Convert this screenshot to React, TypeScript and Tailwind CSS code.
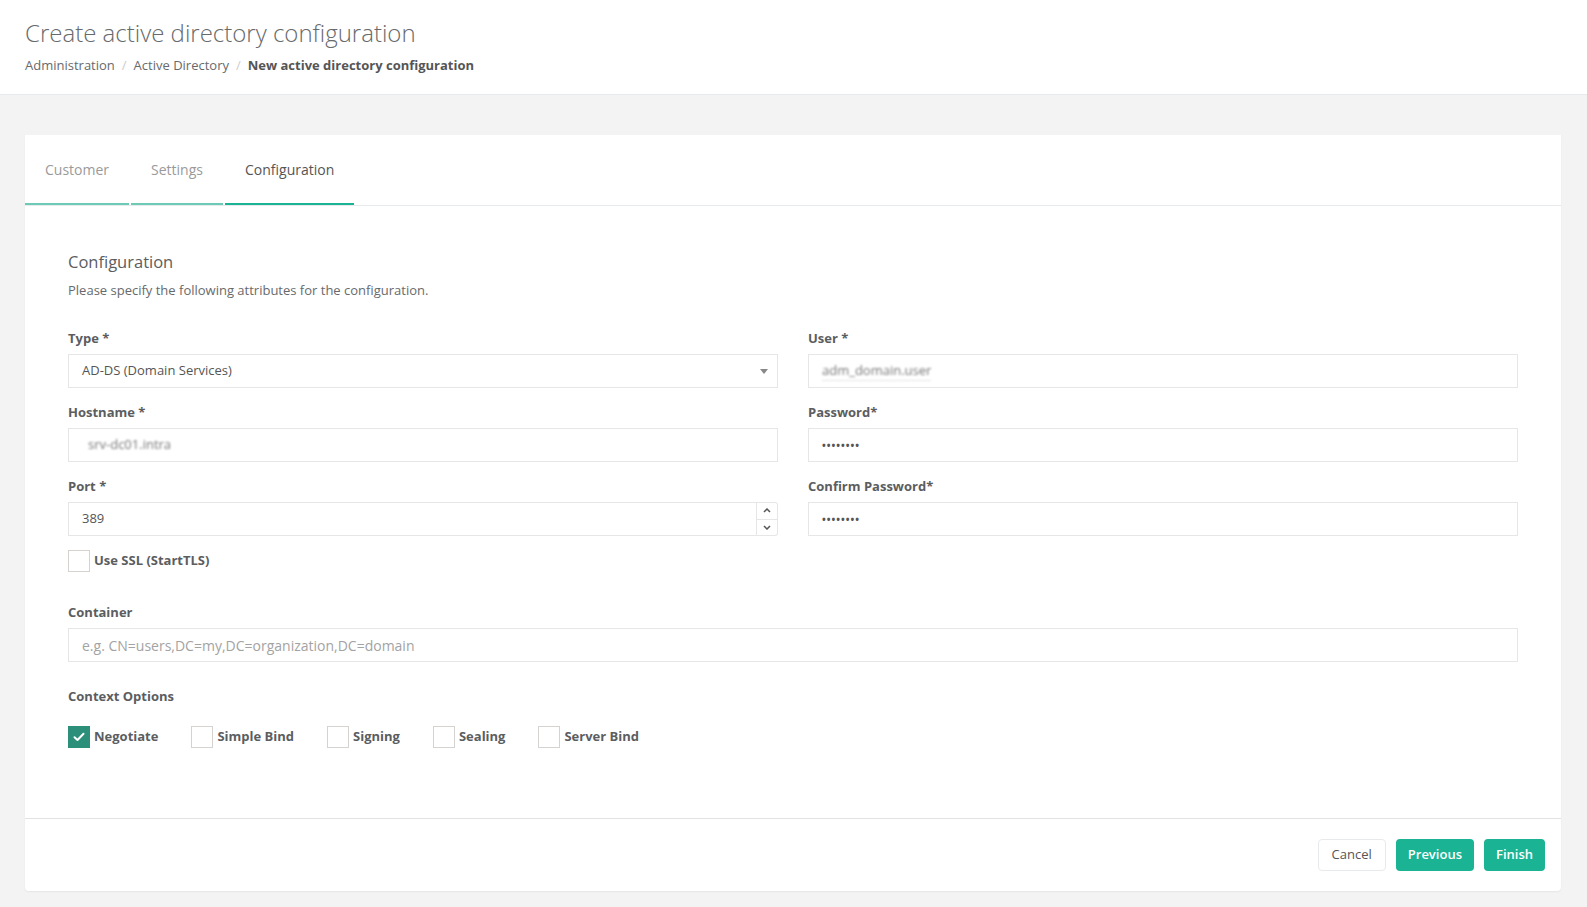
import React from 'react';

const labelCls = 'block text-[13px] leading-[18px] font-bold text-[#5b5d5f]';
const inputCls =
  'flex h-[34px] w-full items-center border border-[#e5e6e7] bg-white px-[13px] text-[13px] text-[#555]';

function Field({ label, children }: { label: string; children: React.ReactNode }) {
  return (
    <div className="mb-[15px]">
      <div className={labelCls}>{label}</div>
      <div className="mt-[7px]">{children}</div>
    </div>
  );
}

function Box({ checked }: { checked?: boolean }) {
  return checked ? (
    <span className="flex h-[22px] w-[22px] items-center justify-center bg-[#2b8f7a]">
      <svg width="12" height="10" viewBox="0 0 12 10" fill="none">
        <path d="M1.5 5.2 4.5 8 10.5 1.8" stroke="white" strokeWidth="2" strokeLinecap="round" strokeLinejoin="round" />
      </svg>
    </span>
  ) : (
    <span className="h-[22px] w-[22px] border border-[#d6d2cf] bg-white" />
  );
}

function Check({ label, checked }: { label: string; checked?: boolean }) {
  return (
    <label className="flex items-center gap-[4px]">
      <Box checked={checked} />
      <span className="text-[13px] font-bold text-[#5b5d5f]">{label}</span>
    </label>
  );
}

const Dots = () => <span className="text-[10px] font-bold tracking-[1px] text-[#555]">••••••••</span>;

export default function App() {
  const tabs = [
    { name: 'Customer', active: false },
    { name: 'Settings', active: false },
    { name: 'Configuration', active: true }
  ];

  return (
    <div className="min-h-screen bg-[#f3f3f4] font-['Open_Sans',sans-serif] text-[#676a6c]">
      <div className="h-[95px] border-b border-[#e7eaec] bg-white px-[25px] pt-[19px]">
        <h2 className="text-[24px] font-light leading-[28px] text-[#676a6c]">Create active directory configuration</h2>
        <div className="mt-[9px] flex items-center text-[13px] leading-[18px]">
          <span>Administration</span>
          <span className="px-[7px] text-[#ccc]">/</span>
          <span>Active Directory</span>
          <span className="px-[7px] text-[#ccc]">/</span>
          <span className="font-bold text-[#555]">New active directory configuration</span>
        </div>
      </div>

      <div className="pl-[25px] pr-[26px] pt-[40px]">
        <div className="rounded-b-[4px] bg-white shadow-[0_1px_2px_rgba(0,0,0,0.06)]">
          <div className="flex gap-[2px] border-b border-[#e7eaec]">
            {tabs.map((t) => (
              <div
                key={t.name}
                className={
                  'flex h-[70px] items-center border-b-2 px-5 text-[14px] ' +
                  (t.active ? 'border-[#1ab394] text-[#555]' : 'border-[#6ccab5] text-[#9a9a9a]')
                }
              >
                {t.name}
              </div>
            ))}
          </div>

          <div className="px-[43px] pb-[70px] pt-[46px]">
            <h3 className="text-[16.5px] leading-[20px] text-[#5b5d5f]">Configuration</h3>
            <p className="mt-[9px] text-[13px] leading-[18px] text-[#676a6c]">
              Please specify the following attributes for the configuration.
            </p>

            <div className="mt-[30px] grid grid-cols-2 gap-x-[30px]">
              <div>
                <Field label="Type *">
                  <div className={inputCls + ' justify-between pr-[9px]'}>
                    <span>AD-DS (Domain Services)</span>
                    <svg width="8" height="5" viewBox="0 0 8 5">
                      <path d="M0 0h8L4 5z" fill="#888" />
                    </svg>
                  </div>
                </Field>
                <Field label="Hostname *">
                  <div className={inputCls + ' pl-[19px]'}>
                    <span className="text-[#777] blur-[1px]">srv-dc01.intra</span>
                  </div>
                </Field>
                <Field label="Port *">
                  <div className="flex h-[34px]">
                    <div className={inputCls + ' flex-1'}>389</div>
                    <div className="flex w-[21px] flex-col rounded-r-[3px] border border-l-0 border-[#e5e6e7]">
                      <div className="flex flex-1 items-center justify-center border-b border-[#e5e6e7]">
                        <svg width="8" height="5" viewBox="0 0 8 5" fill="none">
                          <path d="M1 4 4 1l3 3" stroke="#555" strokeWidth="1.5" />
                        </svg>
                      </div>
                      <div className="flex flex-1 items-center justify-center">
                        <svg width="8" height="5" viewBox="0 0 8 5" fill="none">
                          <path d="M1 1l3 3 3-3" stroke="#555" strokeWidth="1.5" />
                        </svg>
                      </div>
                    </div>
                  </div>
                </Field>
              </div>

              <div>
                <Field label="User *">
                  <div className={inputCls}>
                    <span className="border-b border-[#e3e3e3] text-[#777] blur-[1px]">adm_domain.user</span>
                  </div>
                </Field>
                <Field label="Password*">
                  <div className={inputCls}>
                    <Dots />
                  </div>
                </Field>
                <Field label="Confirm Password*">
                  <div className={inputCls}>
                    <Dots />
                  </div>
                </Field>
              </div>
            </div>

            <div className="-mt-px">
              <Check label="Use SSL (StartTLS)" />
            </div>

            <div className="mt-[31px]">
              <div className={labelCls}>Container</div>
              <div className="mt-[7px]">
                <div className={inputCls + ' text-[14px] text-[#a3a3a3]'}>
                  e.g. CN=users,DC=my,DC=organization,DC=domain
                </div>
              </div>
            </div>

            <div className="mt-[25px]">
              <div className={labelCls}>Context Options</div>
              <div className="mt-[21px] flex gap-[33px]">
                <Check label="Negotiate" checked />
                <Check label="Simple Bind" />
                <Check label="Signing" />
                <Check label="Sealing" />
                <Check label="Server Bind" />
              </div>
            </div>
          </div>

          <div className="flex justify-end gap-[10px] border-t border-[#e2e2e2] pb-[20px] pl-5 pr-[16px] pt-[20px]">
            <button className="h-[32px] rounded-[4px] border border-[#e7eaec] bg-white px-[13px] text-[13px] text-[#555]">
              Cancel
            </button>
            <button className="h-[32px] rounded-[4px] bg-[#1ab394] px-[12px] text-[13px] font-semibold text-white">
              Previous
            </button>
            <button className="h-[32px] rounded-[4px] bg-[#1ab394] px-[12px] text-[13px] font-semibold text-white">
              Finish
            </button>
          </div>
        </div>
      </div>
    </div>
  );
}
